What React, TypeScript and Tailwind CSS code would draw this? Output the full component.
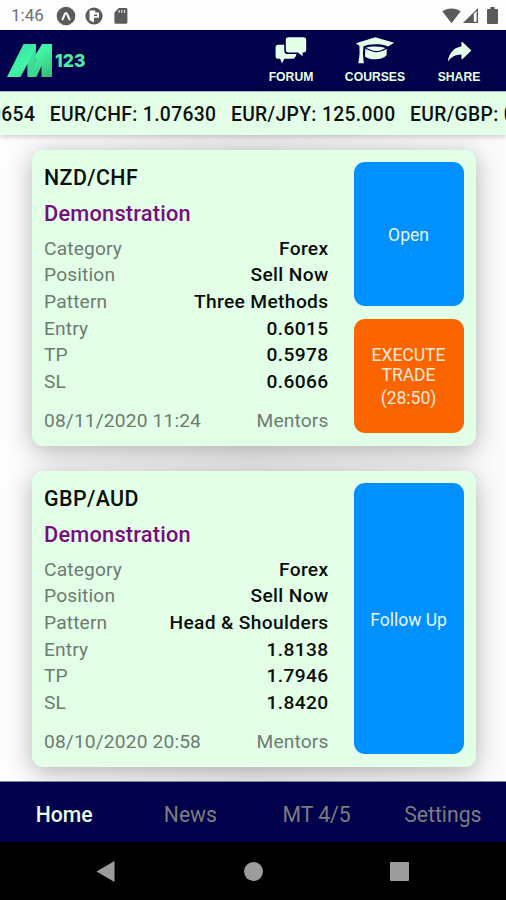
import type { ReactNode } from "react"
import { IoIosShareAlt } from "react-icons/io"

function ForumIcon() {
  return (
    <svg width="32" height="28" viewBox="0 0 32 28" fill="currentColor">
      <path d="M13.5 0.3h15a2.7 2.7 0 0 1 2.7 2.7v9.8a2.7 2.7 0 0 1-2.7 2.7h-.9v3.8l-4.6-3.8h-9.5a2.7 2.7 0 0 1-2.7-2.7V3a2.7 2.7 0 0 1 2.7-2.7z" />
      <path d="M3.2 7.8h6v5.4a3.9 3.9 0 0 0 3.9 3.9h8.3c-.2 1.7-1.5 4.7-3.3 4.7H9.3l-2.4 4.8-1.7-4.8H3.2A2.6 2.6 0 0 1 .6 19.2v-8.8A2.6 2.6 0 0 1 3.2 7.8z" />
    </svg>
  )
}

function CoursesIcon() {
  return (
    <svg width="40" height="28" viewBox="0 0 40 28" fill="currentColor">
      <path d="M20.3 0.3L39.2 5.8 33 9.4c-3-1.6-7-2.2-12.5-2.2S10.8 8.1 8.5 9.3L7.9 16.5l.9 9.7H3.3L4.6 16.5l-.2-7.5L1 6.3z" />
      <path d="M10.4 11c3-1.3 6-1.6 10-1.6 4.7 0 8.3.8 11.3 2.3v6.3c-2.5 2.9-6.6 4.2-11.2 4.2-4.4 0-8-.8-10.6-2.8z" />
      <path d="M10.5 11.4c4 1.1 7 3.3 10.3 3.3 3.4 0 7.2-1.3 11.2-3.7" fill="none" stroke="#00004b" strokeWidth="1.3" />
    </svg>
  )
}

function Logo() {
  return (
    <div className="flex items-center">
      <svg width="46" height="34" viewBox="0 0 46 34">
        <defs>
          <linearGradient id="logo" x1="0" y1="0" x2="1" y2="1">
            <stop offset="0" stopColor="#31dda4" />
            <stop offset="0.5" stopColor="#43f5a6" />
            <stop offset="1" stopColor="#35b873" />
          </linearGradient>
        </defs>
        <path d="M16.5 0H29v10L35 0H45v33H34.5V22L29.5 33H20.5V20L13.5 33H0z" fill="url(#logo)" />
        <path d="M20.5 20L29 3v10l1.500 3-9 17h-1z" fill="#34cb90" opacity="0.5" />
      </svg>
      <span className="ml-[2px] font-[Inter] text-[17.5px] font-extrabold leading-none text-[#4deca6]">123</span>
    </div>
  )
}

function StatusBar() {
  return (
    <div className="flex h-[30px] shrink-0 items-center bg-[#fdfdfe] pl-[11px] pr-[8px] pt-px text-[#5b5b5b]">
      <span className="w-[45px] text-[17px] text-[#707070]">1:46</span>
      <svg width="20" height="20" viewBox="0 0 20 20">
        <circle cx="10" cy="10" r="9.3" fill="currentColor" />
        <path d="M6 14C7.5 12.5 8.5 7 10 7s2.5 5.5 4 7" fill="none" stroke="#fff" strokeWidth="2" />
      </svg>
      <svg className="ml-[9px]" width="18" height="18" viewBox="0 0 18 18">
        <circle cx="9" cy="9" r="8.6" fill="currentColor" />
        <path d="M4.5 3.6h5.8V5.5H14v5.2H9v4.4a6.5 6.5 0 0 1-4.5-2.2z" fill="#fff" />
        <path d="M9 7.5h3.2v1.6H9z" fill="currentColor" />
      </svg>
      <svg className="ml-[11px]" width="14" height="16" viewBox="0 0 14 16">
        <path d="M4.8 0H12a1.4 1.4 0 0 1 1.4 1.4v13A1.4 1.4 0 0 1 12 15.8H1.8A1.4 1.4 0 0 1 .4 14.4V4.6z" fill="currentColor" />
        <path d="M5.2 2v2.8M7.9 2v2.8M10.6 2v2.8" stroke="#fff" strokeWidth="1" />
      </svg>
      <div className="flex-1" />
      <svg width="19" height="16" viewBox="0 0 19 16">
        <path d="M9.5 15.2L.3 3.3C5-.6 14-.6 18.7 3.3z" fill="currentColor" />
      </svg>
      <svg className="ml-[2px]" width="15" height="15" viewBox="0 0 15 15">
        <path d="M0 15L15 0v15z" fill="currentColor" />
        <path d="M10.8 5.8l2.8-2.9v10.8h-2.8z" fill="#fff" />
      </svg>
      <svg className="ml-[9px]" width="11" height="17" viewBox="0 0 11 17">
        <path d="M3.3 0h4.4v2H10a1 1 0 0 1 1 1v13a1 1 0 0 1-1 1H1a1 1 0 0 1-1-1V3a1 1 0 0 1 1-1h2.3z" fill="currentColor" />
      </svg>
    </div>
  )
}

function HeaderAction({ label, children }: { label: string; children: ReactNode }) {
  return (
    <div className="flex w-[84px] flex-col items-center">
      <div className="flex h-[28px] items-center">{children}</div>
      <span className="mt-[5px] font-['Liberation_Sans',sans-serif] text-[12.2px] font-bold leading-[14px]">{label}</span>
    </div>
  )
}

function Header() {
  return (
    <header className="flex h-[61px] shrink-0 items-center justify-between bg-[#00004b] pl-[7px] pr-[5px] text-[#e6ffe9]">
      <Logo />
      <div className="flex">
        <HeaderAction label="FORUM">
          <ForumIcon />
        </HeaderAction>
        <HeaderAction label="COURSES">
          <CoursesIcon />
        </HeaderAction>
        <HeaderAction label="SHARE">
          <IoIosShareAlt size={31} />
        </HeaderAction>
      </div>
    </header>
  )
}

function Ticker() {
  return (
    <div className="relative z-10 flex h-[44px] shrink-0 items-center gap-[14.5px] overflow-hidden whitespace-nowrap border-t border-[#a9b9bd] bg-[#e4ffe8] pt-[3px] text-[19.3px] font-medium tracking-[0.35px] text-[#0d120e] shadow-[0_2px_5px_rgba(0,0,0,0.18)]">
      <span className="-ml-[10px]">0654</span>
      <span>EUR/CHF: 1.07630</span>
      <span>EUR/JPY: 125.000</span>
      <span>EUR/GBP: 0.90190</span>
    </div>
  )
}

const signals = [
  {
    pair: "NZD/CHF",
    rows: [
      ["Category", "Forex"],
      ["Position", "Sell Now"],
      ["Pattern", "Three Methods"],
      ["Entry", "0.6015"],
      ["TP", "0.5978"],
      ["SL", "0.6066"],
    ],
    date: "08/11/2020 11:24",
    action: "Open",
    countdown: "(28:50)",
  },
  {
    pair: "GBP/AUD",
    rows: [
      ["Category", "Forex"],
      ["Position", "Sell Now"],
      ["Pattern", "Head & Shoulders"],
      ["Entry", "1.8138"],
      ["TP", "1.7946"],
      ["SL", "1.8420"],
    ],
    date: "08/10/2020 20:58",
    action: "Follow Up",
    countdown: "",
  },
]

function SignalCard({ signal }: { signal: (typeof signals)[number] }) {
  return (
    <article className="flex h-[296px] shrink-0 gap-[25px] rounded-[11px] bg-[#e4ffe8] p-[12px] pb-[13px] pr-[12.5px] shadow-[0_5px_24px_rgba(0,0,0,0.28)]">
      <div className="flex-1 text-[19.2px] tracking-[0.15px]">
        <h2 className="-mt-[2px] text-[21.4px] font-medium leading-[36px] tracking-[0.4px] text-[#0a0f0b]">{signal.pair}</h2>
        <p className="text-[21.8px] font-medium leading-[36px] tracking-[0.2px] text-[#780d80]">Demonstration</p>
        <dl className="mt-[3.5px]">
          {signal.rows.map(([label, value]) => (
            <div key={label} className="flex justify-between leading-[26.7px]">
              <dt className="text-[#6c7b70]">{label}</dt>
              <dd className="text-[19.2px] font-medium tracking-[0.35px] text-[#0a0f0b]">{value}</dd>
            </div>
          ))}
        </dl>
        <div className="mt-[11.5px] flex justify-between leading-[27px] text-[#6c7b70]">
          <span>{signal.date}</span>
          <span>Mentors</span>
        </div>
      </div>
      <div className="flex w-[110px] flex-col gap-[13px] text-center text-[17.5px] leading-[20px] text-[#eaf6ff]">
        <button className="flex-1 rounded-[11px] bg-[#0090ff] pt-[2px]">{signal.action}</button>
        {signal.countdown && (
          <button className="h-[114px] rounded-[11px] bg-[#fb6500] px-3 pt-px text-[#ffe9dc]">
            EXECUTE TRADE
            <span className="mt-[3px] block">{signal.countdown}</span>
          </button>
        )}
      </div>
    </article>
  )
}

function TabBar() {
  return (
    <nav className="relative z-10 flex h-[61px] shrink-0 items-center border-t border-[#85858f] bg-[#00004b] pl-px pt-[5px] text-[21.2px] text-[#7d7d7f]">
      {["Home", "News", "MT 4/5", "Settings"].map((tab) => (
        <span key={tab} className={`flex-1 text-center ${tab === "Home" ? "font-medium text-[#e4ffe8]" : ""}`}>
          {tab}
        </span>
      ))}
    </nav>
  )
}

function SystemBar() {
  return (
    <div className="relative z-10 flex flex-1 items-center justify-between bg-black pl-[96px] pr-[97px] text-[#9c9c9c]">
      <svg width="19" height="21" viewBox="0 0 19 21" fill="currentColor">
        <path d="M18.5 0v21L.5 10.5z" />
      </svg>
      <div className="ml-[2px] size-[19px] rounded-full bg-[#9c9c9c]" />
      <div className="size-[19px] rounded-[1px] bg-[#9c9c9c]" />
    </div>
  )
}

export default function App() {
  return (
    <main className="flex h-[900px] w-[506px] flex-col overflow-hidden bg-white font-[Roboto,sans-serif]">
      <StatusBar />
      <Header />
      <Ticker />
      <section className="flex h-[646px] shrink-0 flex-col gap-[25px] bg-linear-to-r from-[#fdfdfd] via-[#ececec] to-[#fbfbfb] pl-[32px] pr-[30px] pt-[15px]">
        {signals.map((signal) => (
          <SignalCard key={signal.pair} signal={signal} />
        ))}
      </section>
      <TabBar />
      <SystemBar />
    </main>
  )
}
